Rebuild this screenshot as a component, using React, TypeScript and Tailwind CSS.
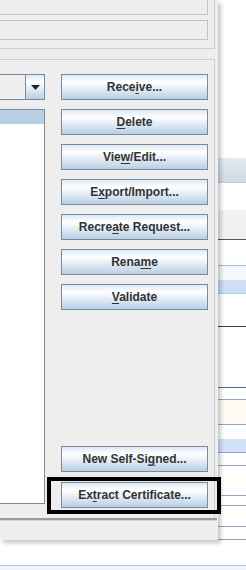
import React from 'react';

const btnGrad = 'bg-[linear-gradient(to_bottom,#dde8f3,#ffffff_30%,#b8cfe5)]';

interface ActionButtonProps {
  before: string;
  mnemonic: string;
  after: string;
}

const ActionButton: React.FC<ActionButtonProps> = ({ before, mnemonic, after }) => (
  <div
    className={`h-[26px] w-full border border-[#7a8a99] ${btnGrad} flex items-center justify-center text-[12px] font-bold text-[#333333] whitespace-nowrap`}
  >
    <span>
      {before}
      <span className="underline underline-offset-2">{mnemonic}</span>
      {after}
    </span>
  </div>
);

// background window rows visible to the right of the dialog
const bgRows: { h: number; cls: string }[] = [
  { h: 158, cls: 'bg-white' },
  { h: 25, cls: 'bg-[linear-gradient(to_bottom,#e3eaf1,#cfdae6)] border-b border-[#c3ccd6]' },
  { h: 27, cls: 'bg-white' },
  { h: 30, cls: 'bg-[#f1f1f1] border-b border-[#555555]' },
  { h: 26, cls: 'bg-white border-b border-[#9dbbd9]' },
  { h: 14, cls: 'bg-[#f4f8fc]' },
  { h: 14, cls: 'bg-[#cddff5] border-b border-[#b6c9df]' },
  { h: 33, cls: 'bg-white border-b border-[#3c3c3c]' },
  { h: 61, cls: 'bg-white border-b border-[#5b6b82]' },
  { h: 12, cls: 'bg-white border-b border-[#8fa8c4]' },
  { h: 25, cls: 'bg-[#fffaf4] border-b border-[#8fa8c4]' },
  { h: 14, cls: 'bg-white' },
  { h: 14, cls: 'bg-[#d3e3f6] border-b border-[#8fa8c4]' },
  { h: 13, cls: 'bg-white border-b border-[#8fa8c4]' },
  { h: 30, cls: 'bg-white border-b border-[#8fa8c4]' },
  { h: 10, cls: 'bg-white border-b border-[#8fa8c4]' },
  { h: 21, cls: 'bg-white border-b border-[#8fa8c4]' },
  { h: 13, cls: 'bg-white border-b border-[#8fa8c4]' },
];

export default function App() {
  return (
    <div
      className="w-[246px] h-[570px] overflow-hidden bg-white flex flex-col"
      style={{ fontFamily: '"Liberation Sans", Arial, sans-serif' }}
    >
      <div className="flex h-[540px]">
        {/* Dialog */}
        <div className="relative z-10 w-[218px] h-[540px] bg-[#eeeeee] flex flex-col shadow-[3px_3px_4px_rgba(0,0,0,0.22)]">
          {/* top panel with text fields */}
          <div className="h-[49px] w-[215px] border-r border-b border-[#c5cdd6] pr-[6px]">
            <div className="h-[15px] border-r border-b border-[#b9c5d2]" />
            <div className="mt-[5px] h-[20px] border border-l-0 border-[#b9c5d2]" />
          </div>

          {/* main panel */}
          <div className="mt-[10px] w-[215px] h-[459px] border-t border-r border-[#c5cdd6] flex pt-[14px] pr-[6px]">
            {/* left column: combo + list */}
            <div className="w-[45px] flex flex-col">
              <div className="h-[26px] flex border border-l-0 border-[#7a8a99] bg-[#efefef]">
                <div className="flex-1" />
                <div className={`w-[19px] border-l border-[#7a8a99] ${btnGrad} flex items-center justify-center`}>
                  <svg width="9" height="5" viewBox="0 0 9 5">
                    <path d="M0 0 H9 L4.5 5 Z" fill="#222222" />
                  </svg>
                </div>
              </div>
              <div className="mt-[9px] h-[395px] bg-white border border-l-0 border-[#7a8a99]">
                <div className="h-[14px] bg-[#b8cfe5]" />
              </div>
            </div>

            {/* button column */}
            <div className="ml-[16px] flex-1 flex flex-col">
              <div className="flex flex-col gap-[9px]">
                <ActionButton before="Rece" mnemonic="i" after="ve..." />
                <ActionButton before="" mnemonic="D" after="elete" />
                <ActionButton before="Vie" mnemonic="w" after="/Edit..." />
                <ActionButton before="E" mnemonic="x" after="port/Import..." />
                <ActionButton before="Recre" mnemonic="a" after="te Request..." />
                <ActionButton before="Rena" mnemonic="m" after="e" />
                <ActionButton before="" mnemonic="V" after="alidate" />
              </div>
              <div className="mt-auto flex flex-col gap-[10px] mb-[10px]">
                <ActionButton before="New Self-Si" mnemonic="g" after="ned..." />
                <div className="relative">
                  <ActionButton before="Ex" mnemonic="t" after="ract Certificate..." />
                  <div className="absolute -left-[14px] -right-[13px] -top-[5px] -bottom-[6px] border-[4px] border-black" />
                </div>
              </div>
            </div>
          </div>

          {/* bottom separator */}
          <div className="w-[217px] h-[3px] border-t-2 border-[#9a9a9a] border-b border-b-[#d4d4d4]" />
          <div className="flex-1" />
        </div>

        {/* background window strip */}
        <div className="flex-1 flex flex-col">
          {bgRows.map((r, i) => (
            <div key={i} className={r.cls} style={{ height: r.h }} />
          ))}
        </div>
      </div>

      {/* below dialog */}
      <div className="flex-1 flex flex-col">
        <div className="h-[25px] bg-white" />
        <div className="h-[1px] bg-[#a9c8e6]" />
        <div className="flex-1 bg-[#eef5fc]" />
      </div>
    </div>
  );
}
